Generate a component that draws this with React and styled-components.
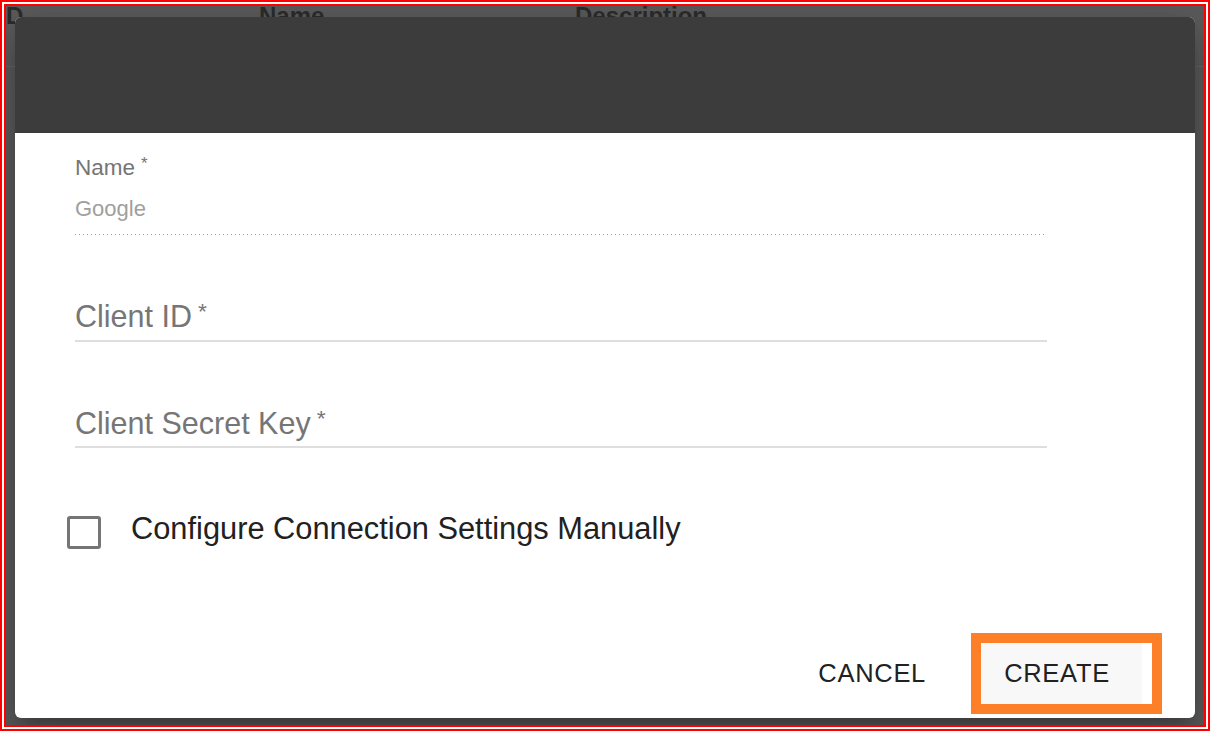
import React from "react";
import styled, { createGlobalStyle } from "styled-components";

const GlobalStyle = createGlobalStyle`
  html, body {
    margin: 0;
    padding: 0;
    background: #ffffff;
  }
  body {
    font-family: "Liberation Sans", Arial, sans-serif;
  }
`;

// red annotation frame around the capture
const Frame = styled.div`
  width: 1210px;
  height: 731px;
  box-sizing: border-box;
  border: 2px solid #ff0000;
  padding: 2px;
  background: #ffffff;
`;

const Screen = styled.div`
  position: relative;
  height: 100%;
  box-sizing: border-box;
  border: 2px solid #ff0000;
  background: #5b5b5b;
  overflow: hidden;
`;

// table header behind the dimmed backdrop
const TableHead = styled.div`
  display: grid;
  grid-template-columns: 253px 316px 1fr;
  height: 60px;
  border-bottom: 1px solid #666666;
`;

const HeadCell = styled.div`
  font-size: 24px;
  line-height: 20px;
  font-weight: 700;
  color: #2c2c2c;
`;

const Dialog = styled.div`
  position: absolute;
  left: 9px;
  top: 11px;
  width: 1180px;
  height: 701px;
  display: flex;
  flex-direction: column;
  background: #ffffff;
  border-radius: 6px;
  overflow: hidden;
  box-shadow: 0 11px 15px -7px rgba(0, 0, 0, 0.2),
    0 24px 38px 3px rgba(0, 0, 0, 0.14), 0 9px 46px 8px rgba(0, 0, 0, 0.12);
`;

const DialogHeader = styled.div`
  height: 116px;
  flex-shrink: 0;
  background: #3c3c3c;
`;

const DialogBody = styled.div`
  flex: 1;
  display: flex;
  flex-direction: column;
  padding: 0 148px 0 60px;
`;

const ReadOnlyField = styled.div`
  margin-top: 23px;
  display: flex;
  flex-direction: column;
`;

const SmallLabel = styled.label`
  font-size: 22.5px;
  line-height: 1;
  color: #757575;
`;

const ReadOnlyValue = styled.div`
  margin-top: 19px;
  padding-bottom: 15px;
  font-size: 22px;
  line-height: 1;
  color: #a0a0a0;
  background-image: linear-gradient(to right, #9a9a9a 34%, transparent 0%);
  background-position: left bottom;
  background-size: 4px 1px;
  background-repeat: repeat-x;
`;

const TextField = styled.div`
  margin-top: ${({ $gap }) => $gap}px;
  padding-bottom: 8px;
  font-size: 30.5px;
  line-height: 1;
  color: #767676;
  border-bottom: 2px solid #dedede;
`;

const Required = styled.span`
  margin-left: 6px;
  font-size: 0.75em;
  vertical-align: 0.35em;
`;

const CheckRow = styled.label`
  margin: 68px 0 0 -8px;
  display: flex;
  align-items: flex-start;
`;

const CheckBox = styled.span`
  width: 34px;
  height: 33px;
  box-sizing: border-box;
  border: 3.5px solid #757575;
  border-radius: 3px;
  flex-shrink: 0;
`;

const CheckText = styled.span`
  margin: -2px 0 0 30px;
  font-size: 30.8px;
  line-height: 1;
  color: #212121;
`;

const Actions = styled.div`
  display: flex;
  justify-content: flex-end;
  align-items: center;
  padding: 0 33px 4px 0;
`;

const Button = styled.button`
  height: 61px;
  padding: 0 32px 0 23px;
  border: none;
  border-radius: 0;
  background: ${({ $hover }) => ($hover ? "#f8f8f8" : "transparent")};
  font-family: "Liberation Sans", Arial, sans-serif;
  font-size: 25.5px;
  letter-spacing: 0.7px;
  line-height: 1;
  color: #212121;
  text-transform: uppercase;
  cursor: pointer;
`;

const CancelButton = styled(Button)`
  margin-right: 13px;
`;

const Highlight = styled.div`
  display: flex;
  border: 10px solid #fd7f28;
  padding-right: 10px;
  background: #ffffff;
`;

const CreateButton = styled(Button)`
  width: 161px;
`;

export default function App() {
  return (
    <>
      <GlobalStyle />
      <Frame>
        <Screen>
          <TableHead>
            <HeadCell>D</HeadCell>
            <HeadCell>Name</HeadCell>
            <HeadCell>Description</HeadCell>
          </TableHead>

          <Dialog>
            <DialogHeader />
            <DialogBody>
              <ReadOnlyField>
                <SmallLabel>
                  Name<Required>*</Required>
                </SmallLabel>
                <ReadOnlyValue>Google</ReadOnlyValue>
              </ReadOnlyField>

              <TextField $gap={65}>
                Client ID<Required>*</Required>
              </TextField>
              <TextField $gap={65}>
                Client Secret Key<Required>*</Required>
              </TextField>

              <CheckRow>
                <CheckBox />
                <CheckText>Configure Connection Settings Manually</CheckText>
              </CheckRow>
            </DialogBody>

            <Actions>
              <CancelButton>Cancel</CancelButton>
              <Highlight>
                <CreateButton $hover>Create</CreateButton>
              </Highlight>
            </Actions>
          </Dialog>
        </Screen>
      </Frame>
    </>
  );
}
